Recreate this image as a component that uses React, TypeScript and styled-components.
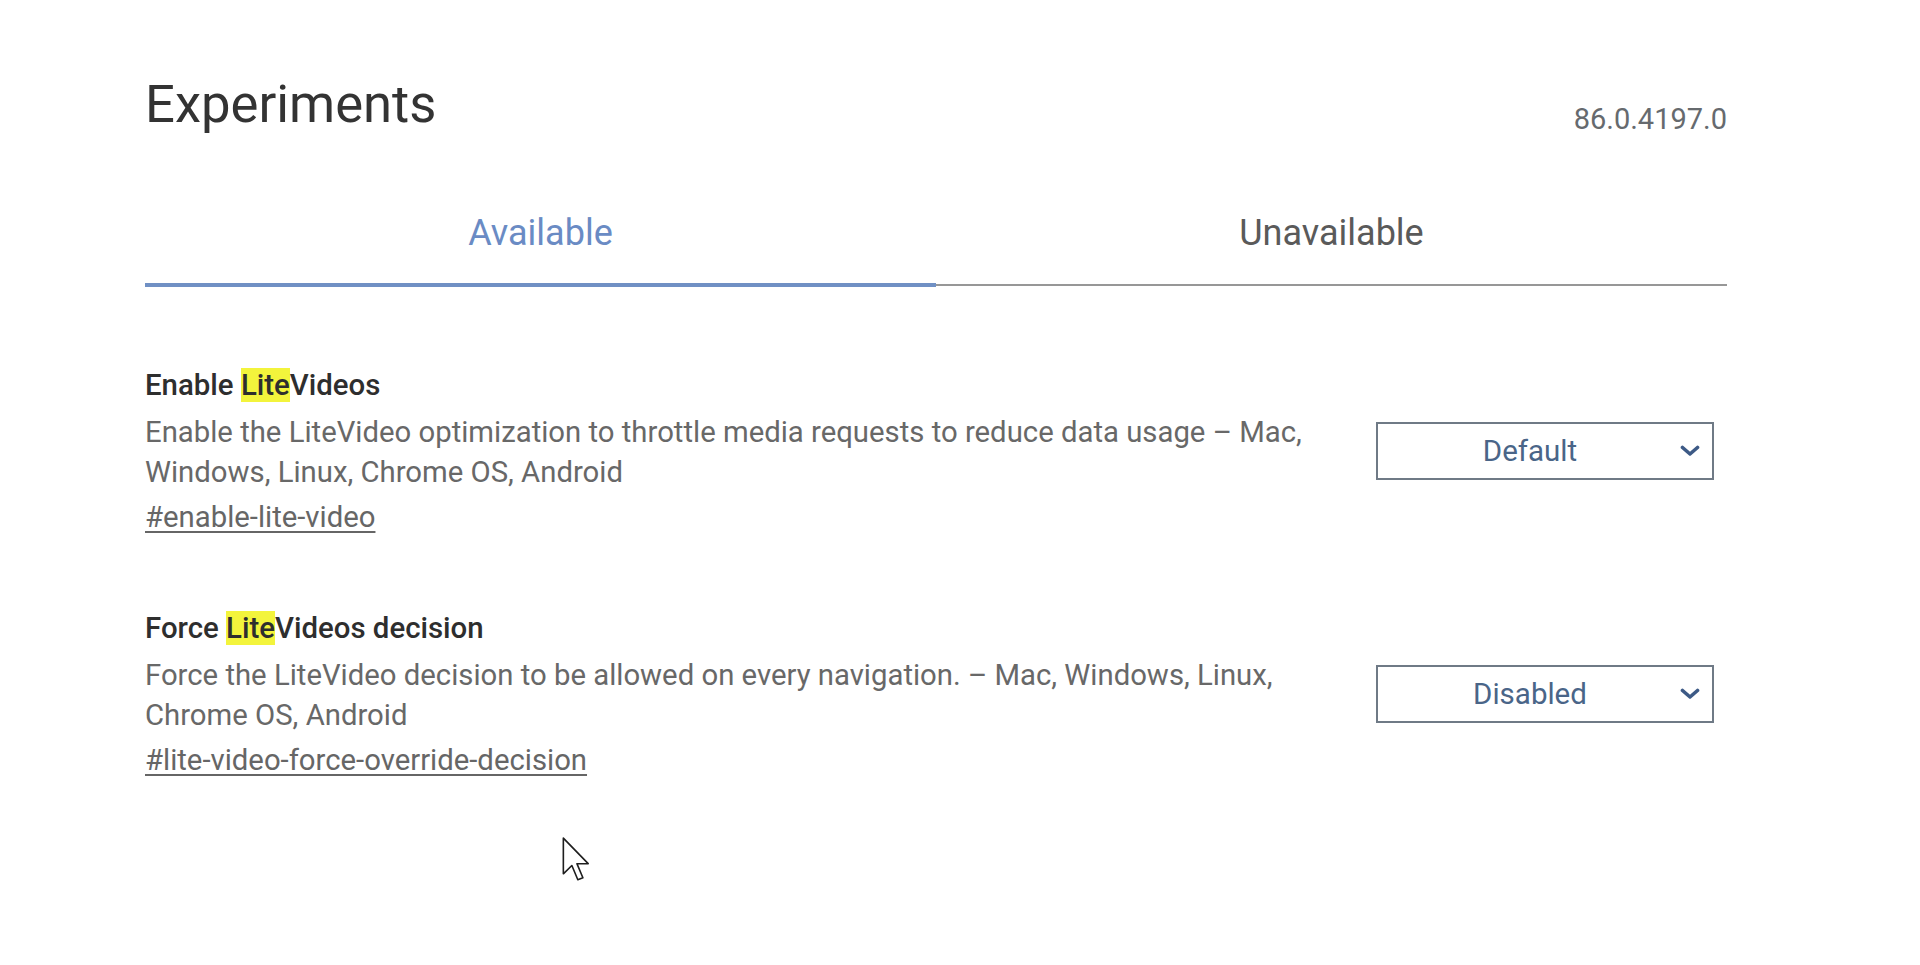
import React from "react";
import styled, { createGlobalStyle } from "styled-components";

const GlobalStyle = createGlobalStyle`
  html, body { margin: 0; padding: 0; background: #ffffff; }
  body { font-family: Roboto, "Liberation Sans", Arial, sans-serif; }
  * { box-sizing: border-box; }
`;

const Page = styled.div`
  position: relative;
  width: 1920px;
  min-height: 965px;
  padding: 73px 193px 0 145px;
  background: #fff;
`;

const Header = styled.header`
  display: flex;
  justify-content: space-between;
  align-items: flex-start;
`;

const Title = styled.h1`
  margin: 0;
  font-size: 52.6px;
  font-weight: 400;
  line-height: 62px;
  color: #333333;
`;

const Version = styled.div`
  padding-top: 30px;
  padding-right: 0;
  font-size: 29px;
  line-height: 32px;
  color: #666a6e;
`;

const TabList = styled.div`
  display: flex;
  align-items: flex-start;
  margin-top: 77px;
`;

const Tab = styled.div<{ $active?: boolean }>`
  flex: 1;
  text-align: center;
  font-size: 36px;
  line-height: 42px;
  padding-bottom: ${(p) => (p.$active ? "29px" : "30px")};
  color: ${(p) => (p.$active ? "#6a8bc4" : "#5a5a5a")};
  border-bottom: ${(p) => (p.$active ? "4px solid #7090c4" : "2px solid #979797")};
`;

const FlagList = styled.div`
  display: flex;
  flex-direction: column;
  gap: 70px;
  margin-top: 77px;
`;

const FlagRow = styled.div`
  display: flex;
  align-items: center;
  gap: 36px;
  padding-right: 13px;
`;

const FlagText = styled.div`
  flex: 1;
  min-width: 0;
`;

const FlagName = styled.h3`
  margin: 0;
  font-size: 29.4px;
  font-weight: 500;
  line-height: 43px;
  color: #2e2e2e;
`;

const Highlight = styled.mark`
  background: #f3f43c;
  color: inherit;
  padding: 0;
`;

const Description = styled.p`
  margin: 5px 0 0;
  font-size: 29.3px;
  line-height: 40px;
  color: #686868;
`;

const FlagLink = styled.a`
  display: inline-block;
  margin-top: 5px;
  font-size: 29.3px;
  line-height: 40px;
  color: #666666;
  text-decoration: underline;
  text-underline-offset: 4px;
`;

const SelectBox = styled.div`
  flex: 0 0 338px;
  height: 58px;
  display: flex;
  align-items: center;
  padding: 0 12px 0 16px;
  border: 2px solid #6f7a86;
  background: #fff;
`;

const SelectValue = styled.span`
  flex: 1;
  margin-right: 14px;
  text-align: center;
  font-size: 29.5px;
  color: #4a6588;
`;

const Cursor = styled.svg`
  position: absolute;
  left: 562px;
  top: 837px;
`;

const Chevron = () => (
  <svg width="20" height="12" viewBox="0 0 20 12" fill="none">
    <path d="M2.5 2.5 L10 9 L17.5 2.5" stroke="#3d5a86" strokeWidth="3.6" strokeLinecap="round" strokeLinejoin="round" />
  </svg>
);

type Flag = {
  before: string;
  after: string;
  desc: string;
  link: string;
  value: string;
};

const flags: Flag[] = [
  {
    before: "Enable ",
    after: "Videos",
    desc: "Enable the LiteVideo optimization to throttle media requests to reduce data usage – Mac, Windows, Linux, Chrome OS, Android",
    link: "#enable-lite-video",
    value: "Default",
  },
  {
    before: "Force ",
    after: "Videos decision",
    desc: "Force the LiteVideo decision to be allowed on every navigation. – Mac, Windows, Linux, Chrome OS, Android",
    link: "#lite-video-force-override-decision",
    value: "Disabled",
  },
];

export default function App() {
  return (
    <>
      <GlobalStyle />
      <Page>
        <Header>
          <Title>Experiments</Title>
          <Version>86.0.4197.0</Version>
        </Header>
        <TabList>
          <Tab $active>Available</Tab>
          <Tab>Unavailable</Tab>
        </TabList>
        <FlagList>
          {flags.map((f) => (
            <FlagRow key={f.link}>
              <FlagText>
                <FlagName>
                  {f.before}
                  <Highlight>Lite</Highlight>
                  {f.after}
                </FlagName>
                <Description>{f.desc}</Description>
                <FlagLink href={f.link}>{f.link}</FlagLink>
              </FlagText>
              <SelectBox>
                <SelectValue>{f.value}</SelectValue>
                <Chevron />
              </SelectBox>
            </FlagRow>
          ))}
        </FlagList>
        <Cursor width="28" height="46" viewBox="0 0 12 20">
          <path
            d="M0.5 0.5 L0.5 16 L4.2 12.4 L6.8 18.6 L9 17.7 L6.4 11.6 L11.3 11.6 Z"
            fill="#ffffff"
            stroke="#1e1e1e"
            strokeWidth="0.7"
            strokeLinejoin="round"
          />
        </Cursor>
      </Page>
    </>
  );
}
